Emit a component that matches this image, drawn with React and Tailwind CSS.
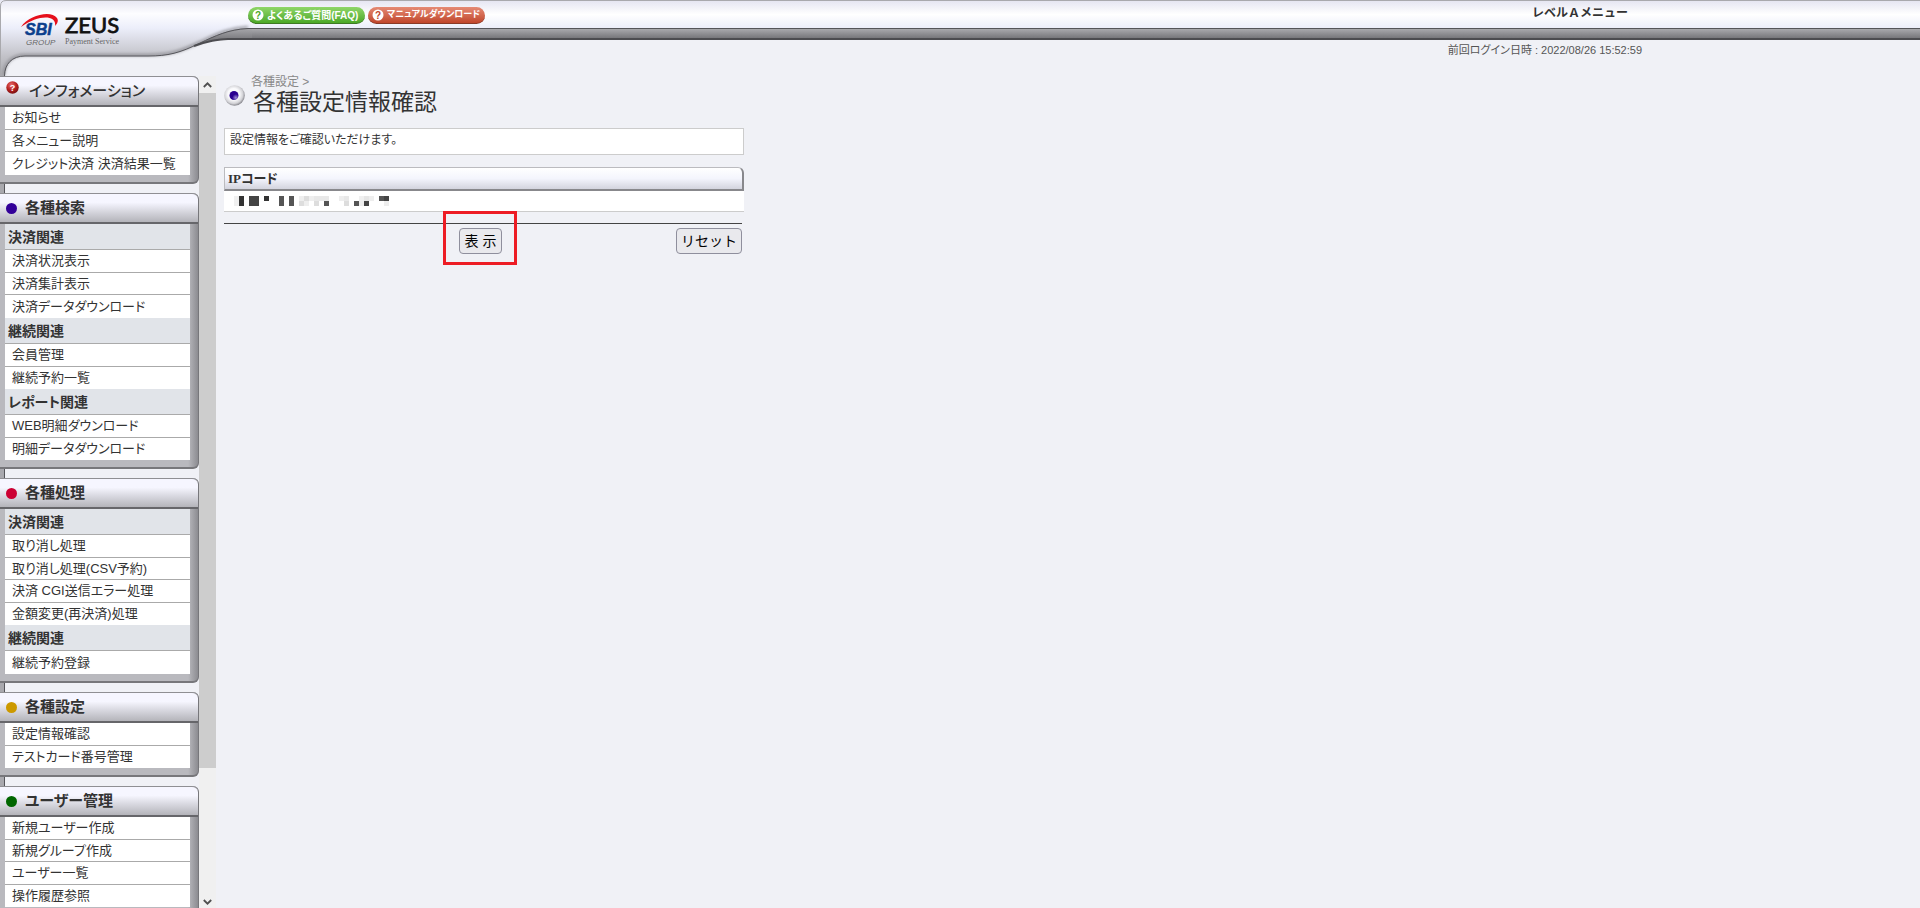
import React from 'react';

const menu = [
  {
    title: 'インフォメーション',
    icon: 'help',
    groups: [{ items: ['お知らせ', '各メニュー説明', 'クレジット決済 決済結果一覧'] }],
  },
  {
    title: '各種検索',
    dot: 'bg-[#330099]',
    groups: [
      { name: '決済関連', items: ['決済状況表示', '決済集計表示', '決済データダウンロード'] },
      { name: '継続関連', items: ['会員管理', '継続予約一覧'] },
      { name: 'レポート関連', items: ['WEB明細ダウンロード', '明細データダウンロード'] },
    ],
  },
  {
    title: '各種処理',
    dot: 'bg-[#cc0033]',
    groups: [
      { name: '決済関連', items: ['取り消し処理', '取り消し処理(CSV予約)', '決済 CGI送信エラー処理', '金額変更(再決済)処理'] },
      { name: '継続関連', items: ['継続予約登録'] },
    ],
  },
  {
    title: '各種設定',
    dot: 'bg-[#cc9900]',
    groups: [{ items: ['設定情報確認', 'テストカード番号管理'] }],
  },
  {
    title: 'ユーザー管理',
    dot: 'bg-[#006600]',
    groups: [{ items: ['新規ユーザー作成', '新規グループ作成', 'ユーザー一覧', '操作履歴参照'] }],
  },
];

// masked IP code, two rows of 5px cells
const mask = [
  ['#f0f0f0', '#333333', '#ffffff', '#444444', '#444444', '#ffffff', '#333333', '#ffffff', '#ffffff', '#555555', '#ffffff', '#555555', '#ffffff', '#eeeeee', '#dddddd', '#eeeeee', '#e8e8e8', '#e8e8e8', '#e8e8e8', '#ffffff', '#ffffff', '#eeeeee', '#e8e8e8', '#ffffff', '#ffffff', '#f0f0f0', '#e6e6e6', '#eeeeee', '#ffffff', '#555555', '#444444'],
  ['#f0f0f0', '#333333', '#ffffff', '#444444', '#444444', '#ffffff', '#ffffff', '#ffffff', '#ffffff', '#555555', '#ffffff', '#555555', '#ffffff', '#dddddd', '#eeeeee', '#ffffff', '#dddddd', '#ffffff', '#555555', '#ffffff', '#ffffff', '#ffffff', '#dddddd', '#ffffff', '#555555', '#eeeeee', '#444444', '#ffffff', '#ffffff', '#ffffff', '#eeeeee'],
];

const HelpBall = () => (
  <svg width="13" height="13" viewBox="0 0 13 13" className="mb-2 shrink-0">
    <defs>
      <radialGradient id="ball" cx="0.4" cy="0.3" r="0.7">
        <stop offset="0" stopColor="#e86a6a" />
        <stop offset="0.6" stopColor="#b52020" />
        <stop offset="1" stopColor="#7d1212" />
      </radialGradient>
    </defs>
    <circle cx="6.5" cy="6.5" r="6.2" fill="url(#ball)" />
    <text x="6.5" y="10" textAnchor="middle" fontSize="9" fontWeight="700" fill="#fff" fontFamily="Liberation Sans, sans-serif">?</text>
  </svg>
);

const Panel = ({ title, icon, dot, groups }) => (
  <section className="mb-[9px] rounded-r-md border-r border-b-2 border-[#77777b] bg-linear-to-r from-[#b9b9be] from-95% to-[#8c8c91]">
    <h2 className="flex h-[31px] items-center rounded-tr-md border-t border-b-2 border-t-[#8f8f93] border-b-[#66666a] bg-linear-to-b from-[#f6f6ff] from-30% to-[#b4b4ba] pl-[6px] text-[15px] font-bold">
      {icon ? <HelpBall /> : <span className={`size-[11px] shrink-0 rounded-full ${dot}`}></span>}
      <span className={icon ? 'pl-[10px] font-medium' : 'pl-2'}>{title}</span>
    </h2>
    <div className="mr-2 ml-[5px]">
      {groups.map((group, i) => (
        <div key={i}>
          {group.name && (
            <h3 className="flex h-[26px] items-center border-b border-[#aaaaaa] bg-[#e1e4e9] pl-[3px] text-sm font-bold">{group.name}</h3>
          )}
          <ul>
            {group.items.map((item) => (
              <li key={item} className="border-b border-[#aaaaaa] bg-white odd:h-[23px] even:h-[22px] last:border-b-0">
                <a href="#" className="flex h-full items-center pl-[7px] text-[13px]">{item}</a>
              </li>
            ))}
          </ul>
        </div>
      ))}
    </div>
    <div className="h-[7px]"></div>
  </section>
);

const HeaderCurve = () => (
  <svg width="252" height="76" viewBox="0 0 252 76" className="absolute top-0 left-0">
    <defs>
      <linearGradient id="metal" x1="0" y1="0" x2="0" y2="76" gradientUnits="userSpaceOnUse">
        <stop offset="0" stopColor="#e6e6f2" />
        <stop offset="0.18" stopColor="#fdfdff" />
        <stop offset="0.37" stopColor="#eceefa" />
        <stop offset="0.74" stopColor="#c2c2c8" />
        <stop offset="1" stopColor="#a9a9ae" />
      </linearGradient>
      <linearGradient id="band" x1="0" y1="28" x2="0" y2="40" gradientUnits="userSpaceOnUse">
        <stop offset="0" stopColor="#a9a9ad" />
        <stop offset="1" stopColor="#77777b" />
      </linearGradient>
      <filter id="soft" x="-0.1" y="-0.5" width="1.2" height="2">
        <feGaussianBlur stdDeviation="1.5" />
      </filter>
    </defs>
    <path d="M252 28 H248 C228 29 215 36 200 43 C180 53 168 56 148 56 H25 C12 56 5 64 5 76 H252 Z" fill="#f0f1f6" />
    <path d="M252 28 H248 C228 29 215 36 200 43 C180 53 168 56 148 56 H25 C12 56 5 64 5 76 H0 V0 H252 Z" fill="url(#metal)" />
    <path d="M248 27 C228 28 215 35 200 42 C180 52 168 55 148 55 H25 C12 55 4 63 4 75" fill="none" stroke="#8a8a90" strokeWidth="2" filter="url(#soft)" />
    <path d="M252 28 H248 C228 29 215 36 200 43 L196 45 C208 41 216 40 228 40 H252 Z" fill="url(#band)" />
    <path d="M252 28.5 H248 C228 29.500 215 36 200 43 C180 53 168 56 148 56 H25 C12 56 4.500 64 4.500 76" fill="none" stroke="#55555a" />
    <path d="M252 39 H228 C216 39 208 41 194 46" fill="none" stroke="#4c4c50" strokeWidth="2" />
    <path d="M0.500 76 V6 Q0.500 0.500 6 0.500 H252" fill="none" stroke="#a9a9ad" />
  </svg>
);

const Logo = () => (
  <svg width="104" height="36" viewBox="0 0 104 36" className="relative" role="img" aria-label="SBI GROUP ZEUS Payment Service">
    <path d="M0 15 C8 3 30 -2 36 6 C37.500 8 37 11 34 14 C36 3 18 2 0 15 Z" fill="#e6101c" />
    <text x="4" y="23" fontSize="16" fontWeight="700" fontStyle="italic" fill="#0c3f8c" stroke="#0c3f8c" strokeWidth="0.500" fontFamily="Liberation Sans, sans-serif">SBI</text>
    <text x="5" y="33" fontSize="8" fontStyle="italic" fill="#666" fontFamily="Liberation Sans, sans-serif">GROUP</text>
    <text x="44" y="21" fontSize="22" fill="#111" stroke="#111" strokeWidth="0.800" fontFamily="Lato, sans-serif">ZEUS</text>
    <text x="44" y="32" fontSize="8" fill="#666" fontFamily="Liberation Serif, serif">Payment Service</text>
  </svg>
);

const QuestionMark = ({ color }) => (
  <svg width="12" height="12" viewBox="0 0 12 12" className="shrink-0">
    <circle cx="6" cy="6" r="5.500" fill="#fff" />
    <text x="6" y="9.500" textAnchor="middle" fontSize="10" fontWeight="700" fill={color} fontFamily="Liberation Sans, sans-serif">?</text>
  </svg>
);

const App = () => {
  return (
    <div className="flex h-screen flex-col overflow-hidden bg-[#f0f1f6] font-['Liberation_Sans','Noto_Sans_CJK_JP',sans-serif] text-[#333333]">
      <header className="relative h-[76px] shrink-0">
        <div className="h-[28px] border-t border-[#a9a9ad] bg-linear-to-b from-[#e6e6f2] via-white to-[#eceefa]"></div>
        <div className="h-3 border-t border-b-2 border-t-[#55555a] border-b-[#4c4c50] bg-linear-to-b from-[#a9a9ad] to-[#77777b]"></div>
        <HeaderCurve />
        <div className="absolute inset-0 flex items-start">
          <div className="pt-3 pl-[21px]">
            <Logo />
          </div>
          <div className="flex gap-[3px] pt-[7px] pl-[123px] text-white [font-feature-settings:'palt']">
            <a href="#" className="flex h-[17px] w-[117px] items-center gap-[3px] rounded-full border-b border-[#3e7a24] bg-linear-to-b from-[#8fd668] to-[#4ba826] pl-1 text-[10px] font-bold whitespace-nowrap">
              <QuestionMark color="#4ba826" />よくあるご質問(FAQ)
            </a>
            <a href="#" className="flex h-[17px] w-[117px] items-center gap-[3px] rounded-full border-b border-[#8a3a28] bg-linear-to-b from-[#e58a74] to-[#c0452a] pl-1 text-[9px] font-bold whitespace-nowrap">
              <QuestionMark color="#c0452a" />マニュアルダウンロード
            </a>
          </div>
          <div className="mr-[278px] ml-auto flex flex-col items-end">
            <p className="mr-[14px] pt-[5px] text-[12px] leading-4 font-bold">レベルＡメニュー</p>
            <p className="pt-[21px] text-[11px] leading-4 text-[#555555] [font-feature-settings:'palt']">前回ログイン日時 : 2022/08/26 15:52:59</p>
          </div>
        </div>
      </header>

      <div className="flex min-h-0 flex-1">
        <div className="flex w-[216px] shrink-0">
          <nav className="relative min-w-0 flex-1 overflow-hidden [font-feature-settings:'palt']">
            <div className="absolute inset-y-0 left-0 w-[5px] border-r border-[#55555a] bg-[#a9a9ae]"></div>
            <div className="relative">
              {menu.map((section) => (
                <Panel key={section.title} {...section} />
              ))}
            </div>
          </nav>
          <div className="flex w-[17px] flex-col bg-[#f0f0f0]">
            <button type="button" aria-label="上へ" className="flex h-[17px] items-center justify-center">
              <svg width="9" height="6" viewBox="0 0 9 6"><path d="M0.800 5 L4.500 1.300 L8.200 5" fill="none" stroke="#505050" strokeWidth="1.800" /></svg>
            </button>
            <div className="flex-1">
              <div className="h-[84%] bg-[#cdcdcd]"></div>
            </div>
            <button type="button" aria-label="下へ" className="flex h-3 items-center justify-center">
              <svg width="9" height="6" viewBox="0 0 9 6"><path d="M0.800 1 L4.500 4.700 L8.200 1" fill="none" stroke="#505050" strokeWidth="1.800" /></svg>
            </button>
          </div>
        </div>

        <main className="min-w-0 flex-1 pl-2">
          <div className="flex items-start">
            <svg width="21" height="21" viewBox="0 0 21 21" className="mt-[9px]">
              <defs>
                <radialGradient id="pearl" cx="0.46" cy="0.44" r="0.56">
                  <stop offset="0.5" stopColor="#fafafc" />
                  <stop offset="0.8" stopColor="#d2d2d6" />
                  <stop offset="1" stopColor="#85858b" />
                </radialGradient>
                <radialGradient id="pupil" cx="0.7" cy="0.75" r="0.5">
                  <stop offset="0" stopColor="#a08fd8" />
                  <stop offset="0.8" stopColor="#2a0090" />
                </radialGradient>
              </defs>
              <circle cx="10.500" cy="10.500" r="10.300" fill="url(#pearl)" />
              <circle cx="10" cy="10.500" r="4.500" fill="url(#pupil)" />
            </svg>
            <div className="pl-[6px]">
              <p className="text-[12px] leading-3 text-[#888888]">各種設定 &gt;</p>
              <h1 className="pl-[2px] text-[23px] leading-7">各種設定情報確認</h1>
            </div>
          </div>

          <div className="max-w-[520px]">
            <p className="mt-3 h-[27px] border border-[#cccccc] bg-white pl-[5px] text-[12px] leading-[22px] [font-feature-settings:'palt']">設定情報をご確認いただけます。</p>

            <table className="mt-3 w-full border-separate border-spacing-0">
              <thead>
                <tr>
                  <th className="h-6 rounded-tr-md border border-r-2 border-b-2 border-[#bbbbbf] border-r-[#88888c] border-b-[#88888c] bg-linear-to-b from-white via-[#f4f5fd] to-[#d3d4de] pl-[3px] text-left font-['Liberation_Serif','Noto_Sans_CJK_JP',serif] text-[13px] leading-5 font-bold [font-feature-settings:'palt']">IPコード</th>
                </tr>
              </thead>
              <tbody>
                <tr>
                  <td className="h-[21px] border-b border-[#cccccc] bg-white pl-[10px]">
                    <svg width="155" height="10" viewBox="0 0 155 10" className="block">
                      {mask.map((row, y) => row.map((fill, x) => (
                        <rect key={`${x}-${y}`} x={x * 5} y={y * 5} width="5" height="5" fill={fill} />
                      )))}
                    </svg>
                  </td>
                </tr>
              </tbody>
            </table>

            <div className="relative mt-[11px] mr-[2px] flex justify-end border-t border-[#444444] pt-1">
              <button type="button" className="absolute left-[235px] h-[26px] w-[43px] rounded-[4px] border border-[#8f8f9d] bg-[#e9e9ed] text-[14px] leading-5 text-black">表 示</button>
              <div className="pointer-events-none absolute -top-[13px] left-[219px] h-[54px] w-[74px] border-3 border-[#ed1c24]"></div>
              <button type="button" className="h-[26px] rounded-[4px] border border-[#8f8f9d] bg-[#e9e9ed] px-1 text-[14px] leading-5 text-black">リセット</button>
            </div>
          </div>
        </main>
      </div>
    </div>
  );
};

export default App;
